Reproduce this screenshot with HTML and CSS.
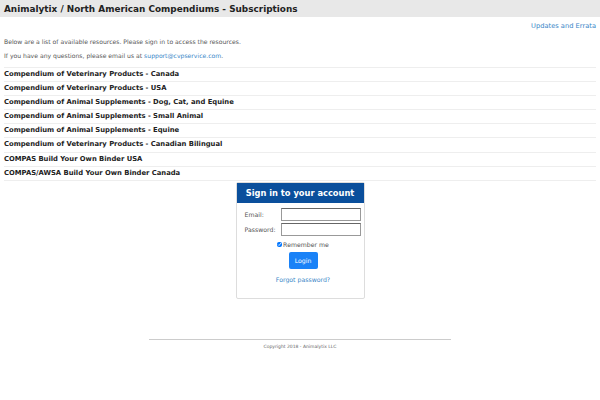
FILE: index.html
```html
<!DOCTYPE html>
<html lang="en">
<head>
  <meta charset="UTF-8">
  <title>Animalytix / North American Compendiums - Subscriptions</title>
  <link rel="stylesheet" href="styles.css">
</head>
<body>

<div class="header">
  <h1>Animalytix / North American Compendiums - Subscriptions</h1>
</div>

<div class="content">
  <div class="top-links">
    <a href="#">Updates and Errata</a>
  </div>

  <p>Below are a list of available resources. Please sign in to access the resources.</p>
  <p>If you have any questions, please email us at <a href="#">support@cvpservice.com</a>.</p>

  <!-- Resource list -->
  <ul class="resources">
    <li>Compendium of Veterinary Products - Canada</li>
    <li>Compendium of Veterinary Products - USA</li>
    <li>Compendium of Animal Supplements - Dog, Cat, and Equine</li>
    <li>Compendium of Animal Supplements - Small Animal</li>
    <li>Compendium of Animal Supplements - Equine</li>
    <li>Compendium of Veterinary Products - Canadian Bilingual</li>
    <li>COMPAS Build Your Own Binder USA</li>
    <li>COMPAS/AWSA Build Your Own Binder Canada</li>
  </ul>

  <!-- Login box -->
  <div class="login-box">
    <div class="login-title">Sign in to your account</div>
    <div class="login-body">
      <div class="field">
        <label for="email">Email:</label>
        <input type="text" id="email">
      </div>
      <div class="field">
        <label for="password">Password:</label>
        <input type="password" id="password">
      </div>
      <div class="remember">
        <input type="checkbox" id="remember" checked>
        <label for="remember">Remember me</label>
      </div>
      <button>Login</button>
      <a class="forgot" href="#">Forgot password?</a>
    </div>
  </div>
</div>

<div class="footer">
  Copyright 2018 - Animalytix LLC
</div>

</body>
</html>
```

FILE: styles.css
```css
/* Global Styles */
body {
  font-family: "DejaVu Sans", Verdana, sans-serif;
  margin: 0;
  background: #fff;
  color: #333;
}

a {
  color: #3a87c8;
  text-decoration: none;
}

.header {
  background: #e8e8e8;
  height: 17px;
  padding: 0 4px;
}

.header h1 {
  margin: 0;
  font-size: 8.9px;
  line-height: 18px;
  color: #222;
}

.content {
  padding: 0 4px;
}

.top-links {
  text-align: right;
  font-size: 6.7px;
  padding-top: 5px;
  height: 13px;
}

p {
  margin: 0;
  font-size: 6.1px;
  line-height: 14px;
  color: #555;
}

.resources {
  list-style: none;
  margin: 4px 0 0;
  padding: 0;
  border-top: 1px solid #eee;
}

.resources li {
  font-size: 6.8px;
  font-weight: bold;
  line-height: 13.1px;
  border-bottom: 1px solid #eee;
  color: #222;
}

.login-box {
  width: 127px;
  margin: 1px auto 0;
  border: 1px solid #ddd;
  border-radius: 2px;
}

.login-title {
  background: #0a4f9c;
  color: #fff;
  font-size: 8.3px;
  font-weight: bold;
  text-align: center;
  line-height: 20px;
}

.login-body {
  padding: 4px 2px 15px 8px;
  display: flex;
  flex-direction: column;
  align-items: center;
  font-size: 6.2px;
  color: #555;
}

.field {
  display: flex;
  align-items: center;
  width: 100%;
  height: 15px;
}

.field label {
  width: 36px;
}

.field input {
  width: 80px;
  height: 13px;
  box-sizing: border-box;
  padding: 0;
  border: 1px solid #999;
  border-top-color: #666;
}

.remember {
  display: flex;
  align-items: center;
  margin-top: 4px;
}

.remember input {
  width: 5px;
  height: 5px;
  margin: 0 1px 0 0;
}

button {
  margin-top: 4px;
  width: 29px;
  height: 17px;
  background: #1a82f7;
  color: #fff;
  border: none;
  border-radius: 2px;
  font-family: inherit;
  font-size: 6.2px;
  padding: 0;
}

.forgot {
  margin-top: 7px;
  font-size: 6.2px;
}

.footer {
  width: 302px;
  margin: 40px auto 0;
  border-top: 1px solid #ccc;
  text-align: center;
  font-size: 4.5px;
  color: #666;
  padding-top: 4px;
}
```
